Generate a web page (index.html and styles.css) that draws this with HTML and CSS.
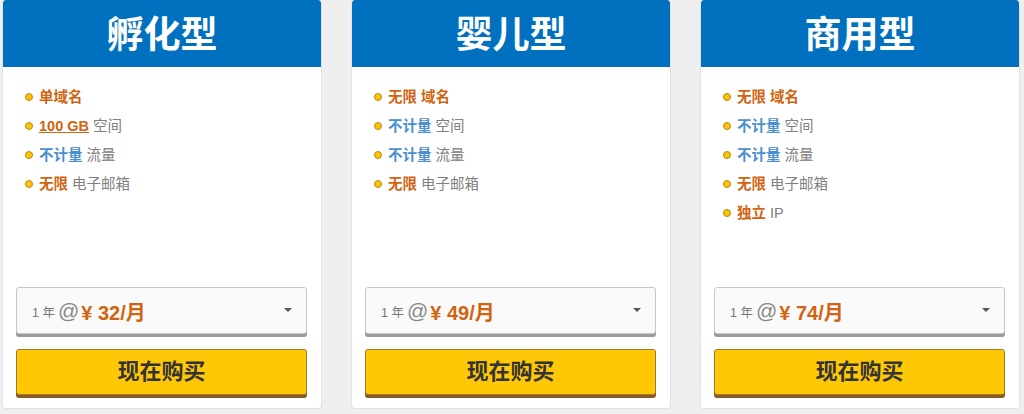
FILE: index.html
```html
<!DOCTYPE html>
<html lang="zh">
<head>
<meta charset="utf-8">
<link rel="stylesheet" href="styles.css">
</head>
<body>
<div class="plans">
  <div class="card">
    <div class="head">孵化型</div>
    <ul class="feats">
      <li><b class="or">单域名</b></li>
      <li><b class="or ul">100 GB</b> 空间</li>
      <li><b class="bl">不计量</b> 流量</li>
      <li><b class="or">无限</b> 电子邮箱</li>
    </ul>
    <div class="sel"><span class="yr">1 年</span> <span class="at">@</span><span class="pr">¥ 32/月</span><span class="caret"></span></div>
    <div class="buy">现在购买</div>
  </div>
  <div class="card">
    <div class="head">婴儿型</div>
    <ul class="feats">
      <li><b class="or">无限 域名</b></li>
      <li><b class="bl">不计量</b> 空间</li>
      <li><b class="bl">不计量</b> 流量</li>
      <li><b class="or">无限</b> 电子邮箱</li>
    </ul>
    <div class="sel"><span class="yr">1 年</span> <span class="at">@</span><span class="pr">¥ 49/月</span><span class="caret"></span></div>
    <div class="buy">现在购买</div>
  </div>
  <div class="card">
    <div class="head">商用型</div>
    <ul class="feats">
      <li><b class="or">无限 域名</b></li>
      <li><b class="bl">不计量</b> 空间</li>
      <li><b class="bl">不计量</b> 流量</li>
      <li><b class="or">无限</b> 电子邮箱</li>
      <li><b class="or">独立</b> IP</li>
    </ul>
    <div class="sel"><span class="yr">1 年</span> <span class="at">@</span><span class="pr">¥ 74/月</span><span class="caret"></span></div>
    <div class="buy">现在购买</div>
  </div>
</div>
</body>
</html>
```

FILE: styles.css
```css
html, body {
  margin: 0;
  padding: 0;
  background: #efefef;
  font-family: "Liberation Sans", Arial, "Noto Sans CJK SC", sans-serif;
}
.plans {
  display: flex;
  gap: 29px;
  padding-left: 2px;
  height: 414px;
}
.card {
  width: 320px;
  height: 409px;
  box-sizing: border-box;
  background: #fff;
  border: 1px solid #e2e2e2;
  border-top: none;
  border-radius: 4px;
  display: flex;
  flex-direction: column;
  overflow: hidden;
}
.head {
  height: 67px;
  background: #0070bf;
  color: #fff;
  font-size: 37px;
  font-weight: bold;
  text-align: center;
  line-height: 72px;
  margin: 0 -1px;
}
.feats {
  list-style: none;
  margin: 0;
  padding: 19px 0 0 22px;
  flex: 1;
}
.feats li {
  display: block;
  height: 29px;
  line-height: 22px;
  font-size: 14.5px;
  color: #808080;
  white-space: pre;
}
.feats li::before {
  content: "";
  display: inline-block;
  vertical-align: 1px;
  width: 6px;
  height: 6px;
  border-radius: 50%;
  background: #ffc300;
  border: 1px solid #b58a1a;
  margin-right: 6px;
}
.or { color: #d2630f; }
.bl { color: #4a8fd0; }
.ul { text-decoration: underline; }
.sel {
  margin: 0 14px 0 13px;
  height: 47px;
  box-sizing: border-box;
  border: 1px solid #c8c8c8;
  border-radius: 3px;
  background: #fafafa;
  box-shadow: 0 3px 0 #9a9a9a;
  display: flex;
  align-items: center;
  padding: 1px 14px 0 15px;
  color: #777;
  white-space: pre;
}
.yr { font-size: 12.5px; }
.at { font-size: 21px; margin: 0 2px 0 3px; color: #888; }
.pr { font-size: 20px; font-weight: bold; color: #d2630f; }
.caret {
  margin-left: auto;
  width: 0;
  height: 0;
  border-left: 4px solid transparent;
  border-right: 4px solid transparent;
  border-top: 4px solid #555;
  margin-top: -3px;
}
.buy {
  margin: 15px 14px 13px 13px;
  height: 46px;
  box-sizing: border-box;
  background: #ffc807;
  border: 1px solid #a37b1e;
  border-radius: 3px;
  box-shadow: 0 3px 0 #8a5a26;
  color: #333;
  font-size: 22px;
  font-weight: bold;
  text-align: center;
  line-height: 44px;
}
```
